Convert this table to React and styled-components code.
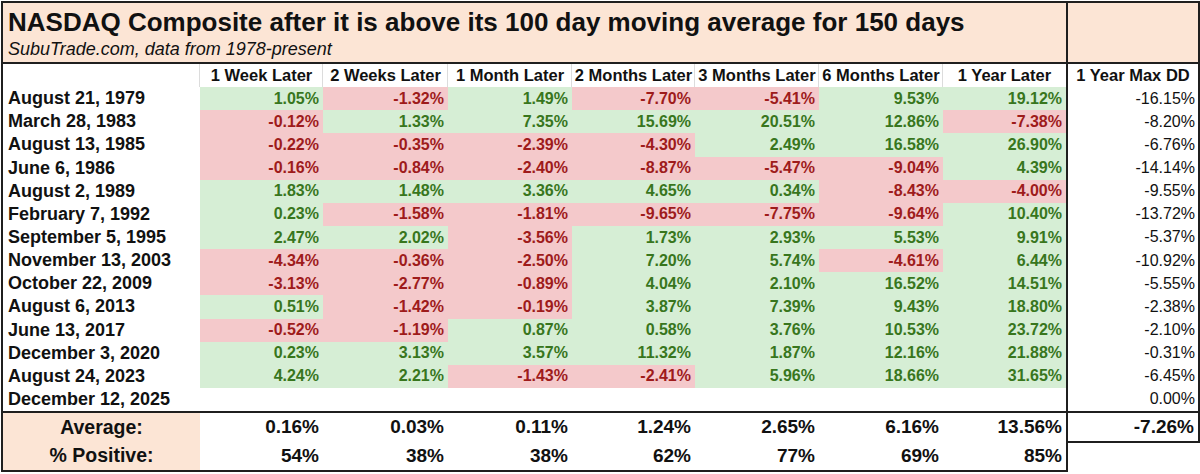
import React from 'react'
import styled, { createGlobalStyle } from 'styled-components'

const GlobalStyle = createGlobalStyle`
  html, body { margin: 0; padding: 0; background: #fff; }
  body { font-family: "Liberation Sans", Arial, sans-serif; color: #111; }
`

const PEACH = '#fce5d5'
const LINE = '#1f1f1f'
const ROW_H = '23.15px'
const FOOT_H = '28.5px'

const Page = styled.div`
  display: flex;
  align-items: flex-start;
  padding: 1px 0 0 1px;
  width: 1200px;
  height: 474px;
  box-sizing: border-box;
`

const MainBox = styled.div`
  border: 2px solid ${LINE};
  display: flex;
  flex-direction: column;
`

const SideBox = styled.div`
  width: 130px;
  border: 2px solid ${LINE};
  border-left: none;
  display: flex;
  flex-direction: column;
`

const TitleBar = styled.div`
  height: 61px;
  box-sizing: border-box;
  background: ${PEACH};
  border-bottom: 2px solid ${LINE};
  padding: 4px 5px 0;
`

const Title = styled.div`
  font-size: 26px;
  font-weight: bold;
  line-height: 30px;
  white-space: nowrap;
`

const Subtitle = styled.div`
  font-size: 18px;
  font-style: italic;
  line-height: 22px;
  margin-top: 1px;
`

const SideTitle = styled.div`
  height: 61px;
  box-sizing: border-box;
  background: ${PEACH};
  border-bottom: 2px solid ${LINE};
`

const Grid = styled.div`
  display: grid;
  grid-template-columns: 197px 123px 125px 124px 123px 124px 124px 123px;
  grid-auto-rows: ${ROW_H};
`

const ColHead = styled.div`
  height: 23px;
  display: flex;
  align-items: center;
  justify-content: center;
  font-size: 16.5px;
  font-weight: bold;
  white-space: nowrap;
  background: #fff;
  border-left: ${p => (p.$first ? 'none' : '1px solid #dcdcdc')};
  margin-left: ${p => (p.$first ? '0' : '-1px')};
`

const DateCell = styled.div`
  display: flex;
  align-items: center;
  padding-left: 5px;
  font-size: 18px;
  font-weight: bold;
  white-space: nowrap;
`

const tones = {
  up: { bg: '#d6eed5', fg: '#38761d' },
  down: { bg: '#f4c9cb', fg: '#9e1b1b' },
  none: { bg: 'transparent', fg: '#111' },
}

const Value = styled.div`
  display: flex;
  align-items: center;
  justify-content: flex-end;
  padding-right: 4px;
  font-size: 16px;
  font-weight: bold;
  background: ${p => tones[p.$tone].bg};
  color: ${p => tones[p.$tone].fg};
`

const Footer = styled.div`
  display: grid;
  grid-template-columns: 197px 123px 125px 124px 123px 124px 124px 123px;
  grid-auto-rows: ${FOOT_H};
  border-top: 2px solid ${LINE};
`

const FootLabel = styled.div`
  display: flex;
  align-items: center;
  justify-content: center;
  background: ${PEACH};
  font-size: 19.5px;
  font-weight: bold;
`

const FootValue = styled.div`
  display: flex;
  align-items: center;
  justify-content: flex-end;
  padding-right: 4px;
  font-size: 19px;
  font-weight: bold;
`

const SideHead = styled(ColHead)`
  border-left: none;
  margin-left: 0;
`

const DDCell = styled.div`
  height: ${ROW_H};
  display: flex;
  align-items: center;
  justify-content: flex-end;
  padding-right: 3px;
  font-size: 16px;
`

const SideFoot = styled.div`
  height: ${FOOT_H};
  border-top: 2px solid ${LINE};
  display: flex;
  align-items: center;
  justify-content: flex-end;
  padding-right: 4px;
  font-size: 19px;
  font-weight: bold;
`

const headers = [
  '1 Week Later',
  '2 Weeks Later',
  '1 Month Later',
  '2 Months Later',
  '3 Months Later',
  '6 Months Later',
  '1 Year Later',
]

const rows = [
  ['August 21, 1979', [1.05, -1.32, 1.49, -7.7, -5.41, 9.53, 19.12], -16.15],
  ['March 28, 1983', [-0.12, 1.33, 7.35, 15.69, 20.51, 12.86, -7.38], -8.2],
  ['August 13, 1985', [-0.22, -0.35, -2.39, -4.3, 2.49, 16.58, 26.9], -6.76],
  ['June 6, 1986', [-0.16, -0.84, -2.4, -8.87, -5.47, -9.04, 4.39], -14.14],
  ['August 2, 1989', [1.83, 1.48, 3.36, 4.65, 0.34, -8.43, -4.0], -9.55],
  ['February 7, 1992', [0.23, -1.58, -1.81, -9.65, -7.75, -9.64, 10.4], -13.72],
  ['September 5, 1995', [2.47, 2.02, -3.56, 1.73, 2.93, 5.53, 9.91], -5.37],
  ['November 13, 2003', [-4.34, -0.36, -2.5, 7.2, 5.74, -4.61, 6.44], -10.92],
  ['October 22, 2009', [-3.13, -2.77, -0.89, 4.04, 2.1, 16.52, 14.51], -5.55],
  ['August 6, 2013', [0.51, -1.42, -0.19, 3.87, 7.39, 9.43, 18.8], -2.38],
  ['June 13, 2017', [-0.52, -1.19, 0.87, 0.58, 3.76, 10.53, 23.72], -2.1],
  ['December 3, 2020', [0.23, 3.13, 3.57, 11.32, 1.87, 12.16, 21.88], -0.31],
  ['August 24, 2023', [4.24, 2.21, -1.43, -2.41, 5.96, 18.66, 31.65], -6.45],
  ['December 12, 2025', [], 0.0],
]

const averages = ['0.16%', '0.03%', '0.11%', '1.24%', '2.65%', '6.16%', '13.56%']
const positives = ['54%', '38%', '38%', '62%', '77%', '69%', '85%']

const pct = n => `${n.toFixed(2)}%`

const App = () => {
  return (
    <>
      <GlobalStyle />
      <Page>
        <MainBox>
          <TitleBar>
            <Title>NASDAQ Composite after it is above its 100 day moving average for 150 days</Title>
            <Subtitle>SubuTrade.com, data from 1978-present</Subtitle>
          </TitleBar>
          <Grid>
            <ColHead $first />
            {headers.map(h => (
              <ColHead key={h}>{h}</ColHead>
            ))}
            {rows.map(([date, vals]) => (
              <React.Fragment key={date}>
                <DateCell>{date}</DateCell>
                {headers.map((h, i) => {
                  const v = vals[i]
                  if (v === undefined) return <Value key={h} $tone="none" />
                  return (
                    <Value key={h} $tone={v < 0 ? 'down' : 'up'}>
                      {pct(v)}
                    </Value>
                  )
                })}
              </React.Fragment>
            ))}
          </Grid>
          <Footer>
            <FootLabel>Average:</FootLabel>
            {averages.map((a, i) => (
              <FootValue key={i}>{a}</FootValue>
            ))}
            <FootLabel>% Positive:</FootLabel>
            {positives.map((p, i) => (
              <FootValue key={i}>{p}</FootValue>
            ))}
          </Footer>
        </MainBox>
        <SideBox>
          <SideTitle />
          <SideHead>1 Year Max DD</SideHead>
          {rows.map(([date, , dd]) => (
            <DDCell key={date}>{pct(dd)}</DDCell>
          ))}
          <SideFoot>-7.26%</SideFoot>
        </SideBox>
      </Page>
    </>
  )
}

export default App
